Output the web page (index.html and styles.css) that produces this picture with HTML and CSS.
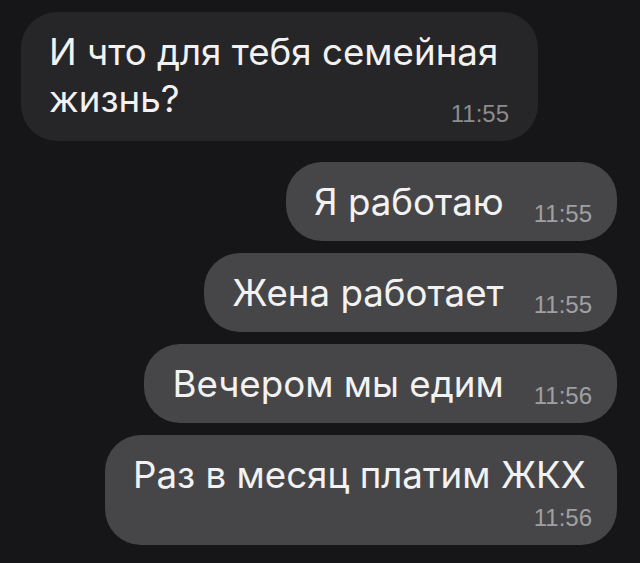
FILE: index.html
```html
<!doctype html>
<html lang="ru">

<head>
	<title>Чат</title>
	<meta charset="utf-8">
	<meta name="viewport" content="width=device-width, initial-scale=1.0">
	<link rel="stylesheet" href="styles.css">
</head>

<body>
	<div class="chat">
		<div class="bubble in">
			<span class="text">И что для тебя семейная жизнь?</span>
			<span class="time">11:55</span>
		</div>
		<div class="bubble out">
			<span class="text">Я работаю</span>
			<span class="time">11:55</span>
		</div>
		<div class="bubble out">
			<span class="text">Жена работает</span>
			<span class="time">11:55</span>
		</div>
		<div class="bubble out">
			<span class="text">Вечером мы едим</span>
			<span class="time">11:56</span>
		</div>
		<div class="bubble out long">
			<span class="text">Раз в месяц платим ЖКХ</span>
			<span class="time">11:56</span>
		</div>
	</div>
</body>

</html>
```

FILE: styles.css
```css
html
{
	margin: 0;
	padding: 0;
}
body
{
	margin: 0;
	padding: 0;
	background: #161618;
	color: #f2f2f2;
	font-family: "Inter", "Liberation Sans", sans-serif;
}

.chat
{
	display: flex;
	flex-direction: column;
	gap: 12px;
	padding: 12px 23px 0 21px;
}

.bubble
{
	box-sizing: border-box;
	padding: 16px 25px 16px 28px;
	border-radius: 36px;
	font-size: 36.7px;
	line-height: 47px;
}

/* the timestamp floats to the right end of the last line */
.time
{
	float: right;
	margin: 24px 0 0 30px;
	font-family: "Liberation Sans", sans-serif;
	font-size: 24px;
	line-height: 23px;
	color: #a0a0a2;
}

.in
{
	align-self: flex-start;
	max-width: 517px;
	margin-bottom: 9px;
	padding-right: 29px;
	background: #262628;
}
.in .time
{
	margin-top: 27px;
	color: #8c8c8e;
}

.out
{
	align-self: flex-end;
	max-width: 512px;
	background: #464648;
}

/* when the text fills the line the time drops to its own row */
.long .time
{
	margin-top: 8px;
}
```
